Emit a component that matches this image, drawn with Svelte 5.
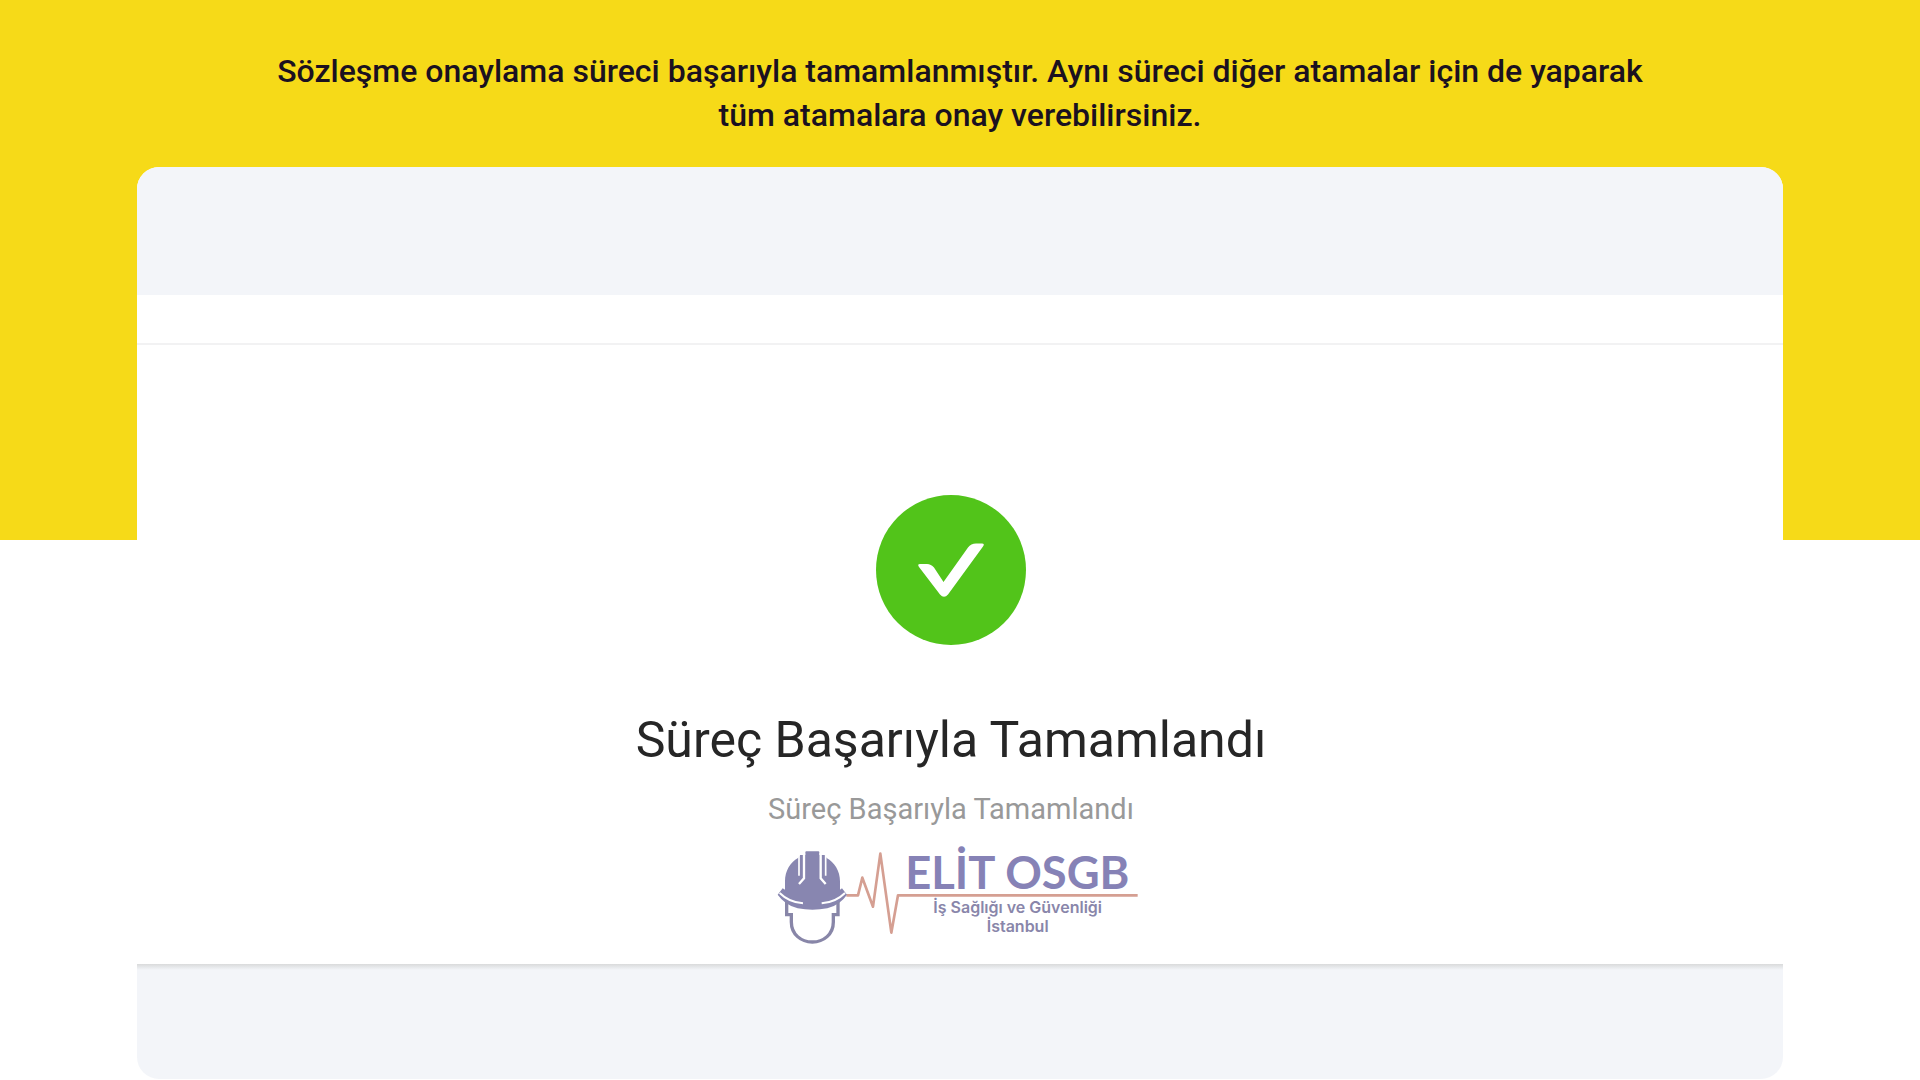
<script lang="ts">
  const message =
    "Sözleşme onaylama süreci başarıyla tamamlanmıştır. Aynı süreci diğer atamalar için de yaparak tüm atamalara onay verebilirsiniz.";

  const result = {
    title: "Süreç Başarıyla Tamamlandı",
    subtitle: "Süreç Başarıyla Tamamlandı",
  };
</script>

<svelte:head>
  <title>{result.title}</title>
</svelte:head>

<main class="page">
  <p class="message">{message}</p>

  <section class="card">
    <div class="card-top"></div>
    <div class="card-strip"></div>

    <div class="result">
      <div class="status">
        <svg class="check" viewBox="0 0 150 150" aria-hidden="true">
          <circle cx="75" cy="75" r="75" fill="#52c41a" />
          <path
            d="M44 69H51Q55 69 58 72.500L67.500 87L92 52.500Q95 48.500 100 48.500H106Q109 48.500 107 51.500L72 99.500Q68 104 64 99.500L43 72Q41 69 44 69Z"
            fill="#fff"
          />
        </svg>
        <h1>{result.title}</h1>
        <p class="subtitle">{result.subtitle}</p>
      </div>

      <svg class="logo" viewBox="50 20 1102 330" role="img" aria-label="Elit OSGB">
        <path
          d="M260 195H295L308 142L340 229L362 70L395 307L415 195H1134"
          fill="none"
          stroke="#d59f92"
          stroke-width="8"
          stroke-linejoin="round"
        />

        <path
          d="M76 178V153C76 121 92 96 115 83L121 74H137V66Q137 63 140 63H176Q179 63 179 66V74H195L201 83C224 96 241 121 241 153V178L247 174L262 193Q241 224 203 234Q158 242 114 234Q76 224 54 193L69 174Z"
          fill="#8886b0"
        />
        <g fill="none" stroke="#fff">
          <path d="M118 70V136M198 70V136" stroke-width="5" />
          <path d="M133 68V144L118 161M183 68V144L198 161" stroke-width="7" />
          <path d="M60 188Q88 216 130 219M256 188Q228 216 186 219" stroke-width="6" />
        </g>
        <path
          d="M81 214V253H95V275C95 312 124 335 158 335C192 335 221 312 221 275V253H235V214"
          fill="none"
          stroke="#8886a8"
          stroke-width="10"
        />

        <g text-anchor="middle">
          <text class="brand" x="773" y="176">ELİT OSGB</text>
          <text class="tagline" x="774" y="249">İş Sağlığı ve Güvenliği</text>
          <text class="tagline" x="774" y="306">İstanbul</text>
        </g>
      </svg>
    </div>

    <div class="card-bottom"></div>
  </section>
</main>

<style>
  :global(body) {
    background: #fff;
  }

  .page {
    box-sizing: border-box;
    display: flex;
    flex-direction: column;
    align-items: center;
    min-height: 100vh;
    padding: 49px 137px 1px;
    background: linear-gradient(#f6da18 50%, #fff 50%);
    font-family: Roboto, "Liberation Sans", sans-serif;
  }

  .message {
    max-width: 1400px;
    margin: 0 0 30px;
    color: #1b1120;
    font-size: 32px;
    font-weight: 500;
    line-height: 44px;
    text-align: center;
  }

  .card {
    display: flex;
    flex: 1;
    flex-direction: column;
    width: 100%;
    overflow: hidden;
    border-radius: 22px;
    background: #fff;
  }

  .card-top {
    height: 128px;
    background: #f3f5f9;
  }

  .card-strip {
    height: 48px;
    border-bottom: 2px solid #f2f2f3;
  }

  .result {
    display: flex;
    flex-direction: column;
    align-items: center;
    gap: 10px;
    padding: 150px 0 17px;
  }

  .status {
    display: flex;
    flex-direction: column;
    align-items: center;
    align-self: stretch;
    padding-right: 18px;
    text-align: center;
  }

  .check {
    width: 150px;
    height: 150px;
  }

  h1 {
    margin: 65px 0 21px;
    color: #262626;
    font-size: 50px;
    font-weight: 400;
    line-height: 60px;
  }

  .subtitle {
    margin: 0;
    color: #999;
    font-size: 29px;
    line-height: 36px;
  }

  .logo {
    width: 368px;
    height: 110px;
  }

  .brand {
    fill: #8682b6;
    font-family: Lato, sans-serif;
    font-size: 136px;
    font-weight: 700;
  }

  .tagline {
    fill: #8986aa;
    font-family: Inter, sans-serif;
    font-size: 48px;
    font-weight: 600;
  }

  .card-bottom {
    flex: 1;
    min-height: 80px;
    background: linear-gradient(#d9dadb, #f3f5f9 6px);
  }
</style>
